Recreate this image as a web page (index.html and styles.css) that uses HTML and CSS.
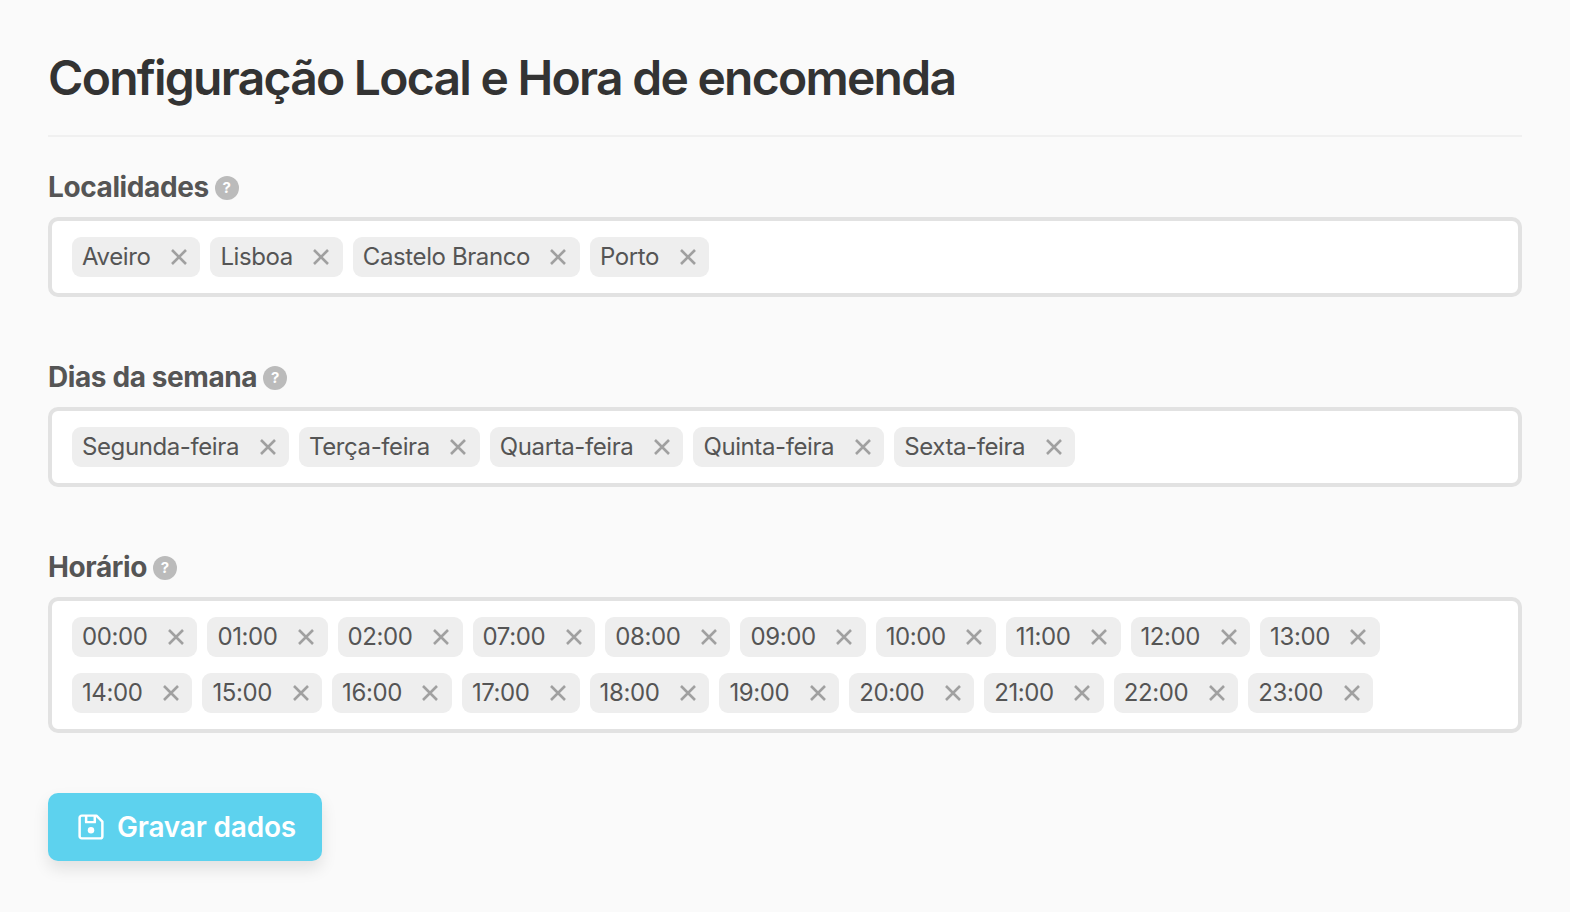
FILE: index.html
```html
<!DOCTYPE html>
<html lang="pt">
<head>
    <meta charset="UTF-8">
    <title>Configuração Local e Hora de encomenda</title>
    <link rel="stylesheet" href="styles.css">
</head>
<body>
    <div class="container">
        <h1>Configuração Local e Hora de encomenda</h1>

        <div class="field">
            <div class="field-label">Localidades <span class="help">?</span></div>
            <div class="tag-box">
                <span class="tag">Aveiro<svg class="tag-x" viewBox="0 0 16 16"><path d="M1 1l14 14M15 1L1 15"/></svg></span>
                <span class="tag">Lisboa<svg class="tag-x" viewBox="0 0 16 16"><path d="M1 1l14 14M15 1L1 15"/></svg></span>
                <span class="tag">Castelo Branco<svg class="tag-x" viewBox="0 0 16 16"><path d="M1 1l14 14M15 1L1 15"/></svg></span>
                <span class="tag">Porto<svg class="tag-x" viewBox="0 0 16 16"><path d="M1 1l14 14M15 1L1 15"/></svg></span>
            </div>
        </div>

        <div class="field">
            <div class="field-label">Dias da semana <span class="help">?</span></div>
            <div class="tag-box">
                <span class="tag">Segunda-feira<svg class="tag-x" viewBox="0 0 16 16"><path d="M1 1l14 14M15 1L1 15"/></svg></span>
                <span class="tag">Terça-feira<svg class="tag-x" viewBox="0 0 16 16"><path d="M1 1l14 14M15 1L1 15"/></svg></span>
                <span class="tag">Quarta-feira<svg class="tag-x" viewBox="0 0 16 16"><path d="M1 1l14 14M15 1L1 15"/></svg></span>
                <span class="tag">Quinta-feira<svg class="tag-x" viewBox="0 0 16 16"><path d="M1 1l14 14M15 1L1 15"/></svg></span>
                <span class="tag">Sexta-feira<svg class="tag-x" viewBox="0 0 16 16"><path d="M1 1l14 14M15 1L1 15"/></svg></span>
            </div>
        </div>

        <div class="field">
            <div class="field-label">Horário <span class="help">?</span></div>
            <div class="tag-box" id="hours"></div>
        </div>

        <button class="save-btn">
            <svg class="save-icon" viewBox="0 0 24 24"><path d="M3.5 1.5H17L22.5 7v13.500a2 2 0 0 1-2 2h-17a2 2 0 0 1-2-2v-17a2 2 0 0 1 2-2z"/><path d="M7.5 1.5v6h8v-6"/><circle cx="12" cy="15" r="3" class="dot"/></svg>
            Gravar dados
        </button>
    </div>

    <script>
        const hours = ['00:00','01:00','02:00','07:00','08:00','09:00','10:00','11:00','12:00','13:00',
                       '14:00','15:00','16:00','17:00','18:00','19:00','20:00','21:00','22:00','23:00'];
        document.getElementById('hours').innerHTML = hours.map(h =>
            `<span class="tag">${h}<svg class="tag-x" viewBox="0 0 16 16"><path d="M1 1l14 14M15 1L1 15"/></svg></span>`
        ).join('');
    </script>
</body>
</html>
```

FILE: styles.css
```css
body {
    font-family: Inter, "Noto Sans", sans-serif;
    margin: 0;
    background-color: #fafafa;
    color: #555;
}
.container {
    padding: 48px 48px 40px;
}
h1 {
    margin: 0 0 34px;
    padding-bottom: 27px;
    border-bottom: 2px solid #f0f0f0;
    font-size: 48px;
    line-height: 60px;
    font-weight: 600;
    letter-spacing: -1.73px;
    color: #333;
}
.field + .field {
    margin-top: 64px;
}
.field-label {
    display: flex;
    align-items: center;
    gap: 6px;
    height: 32px;
    margin-bottom: 14px;
    font-size: 28px;
    font-weight: 700;
    letter-spacing: -0.4px;
    color: #555;
}
.help {
    display: flex;
    align-items: center;
    justify-content: center;
    width: 24px;
    height: 24px;
    margin-top: 1px;
    border-radius: 50%;
    background-color: #bbb;
    color: #fff;
    font-size: 15px;
    font-weight: 700;
    letter-spacing: 0;
}
.tag-box {
    display: flex;
    flex-wrap: wrap;
    gap: 16px 10px;
    padding: 16px 20px;
    background-color: #fff;
    border: 4px solid #e2e2e2;
    border-radius: 10px;
}
.tag {
    display: flex;
    align-items: center;
    box-sizing: border-box;
    height: 40px;
    padding: 0 13.5px 2px 10px;
    background-color: #eee;
    border-radius: 9px;
    font-size: 24px;
    letter-spacing: -0.4px;
    color: #555;
}
.tag-x {
    width: 16px;
    height: 16px;
    margin: 2px 0 0 20.5px;
    fill: none;
    stroke: #a0a0a0;
    stroke-width: 2.6;
}
.save-btn {
    display: flex;
    align-items: center;
    gap: 13px;
    height: 68px;
    margin-top: 60px;
    padding: 0 26px 0 30px;
    background-color: #5dd2ee;
    color: #fff;
    border: none;
    border-radius: 10px;
    box-shadow: 0 8px 16px rgba(0,0,0,0.1);
    font-family: inherit;
    font-size: 28px;
    font-weight: 600;
    letter-spacing: -0.2px;
    cursor: pointer;
}
.save-icon {
    width: 26px;
    height: 26px;
    fill: none;
    stroke: #fff;
    stroke-width: 2.3;
    stroke-linejoin: round;
}
.save-icon .dot {
    fill: #fff;
    stroke: none;
}
```
